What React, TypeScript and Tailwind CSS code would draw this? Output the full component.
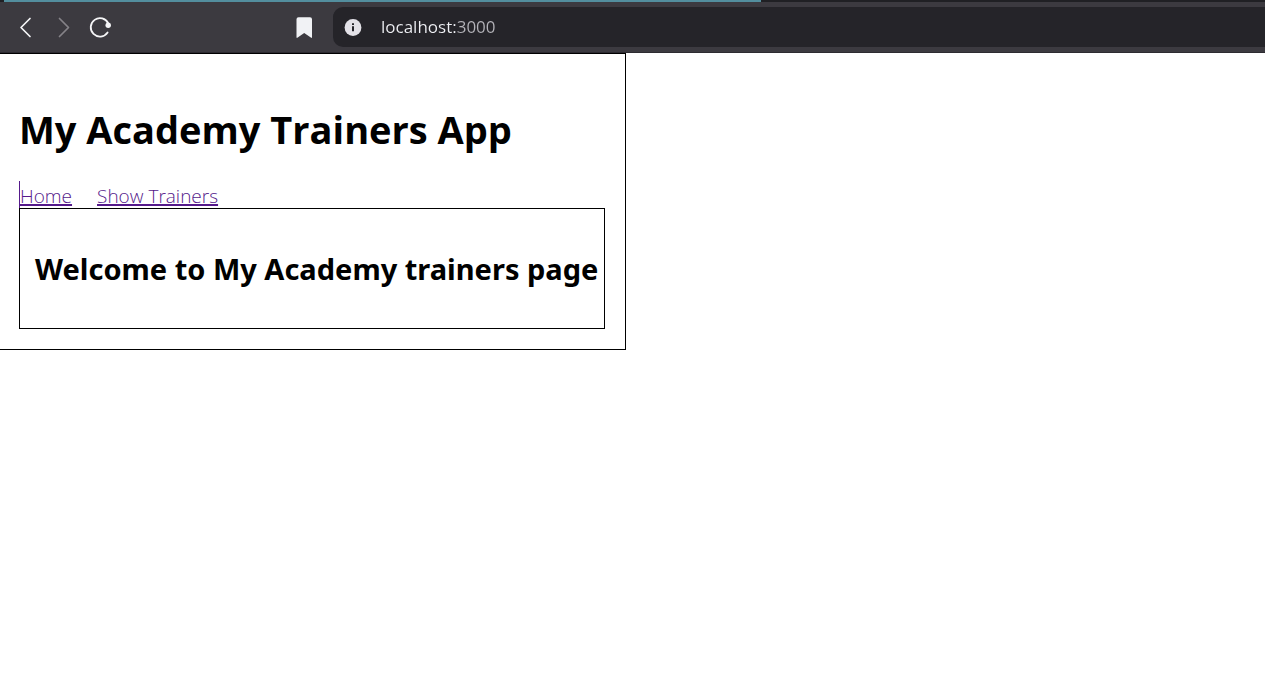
function BrowserBar() {
  return (
    <header className="border-b border-[#2d2b31] bg-[#3c3a40]">
      <div className="flex h-[2px] bg-[#202024] pl-[4px]">
        <div className="w-3/5 bg-[#538e9e]" />
      </div>
      <div className="flex items-center py-[5px]">
        <button type="button" aria-label="Back" className="ml-[14px] flex size-6 items-center justify-center">
          <svg width="24" height="24" viewBox="0 0 24 24" fill="none" stroke="#f5f5f7" strokeWidth="1.7" strokeLinecap="round" strokeLinejoin="round">
            <path d="M16 3.5 7 12.5l9 9" />
          </svg>
        </button>
        <button type="button" aria-label="Forward" className="ml-[14px] flex size-6 items-center justify-center">
          <svg width="24" height="24" viewBox="0 0 24 24" fill="none" stroke="#858388" strokeWidth="1.7" strokeLinecap="round" strokeLinejoin="round">
            <path d="m7.500 3.500 9 9-9 9" />
          </svg>
        </button>
        <button type="button" aria-label="Reload" className="ml-[12px] flex size-6 items-center justify-center">
          <svg width="24" height="24" viewBox="0 0 24 24" fill="none">
            <path d="M20.300 8.500A9.200 9.200 0 1 0 19.600 17.500" stroke="#f5f5f7" strokeWidth="1.800" strokeLinecap="round" />
            <circle cx="20.200" cy="10.200" r="2.700" fill="#f5f5f7" />
          </svg>
        </button>
        <button type="button" aria-label="Bookmarks" className="ml-[180px] flex size-6 items-center justify-center">
          <svg width="24" height="24" viewBox="0 0 24 24" fill="#f1f2f5">
            <path d="M4.500 4.200a2 2 0 0 1 2-2h11.500a2 2 0 0 1 2 2v17.800q0 1.400-1.200.6l-6.600-4.500-6.500 4.500q-1.200.8-1.200-.6z" />
          </svg>
        </button>
        <div className="ml-[17px] flex h-10 flex-1 items-center rounded-l-[10px] bg-[#252429] pl-[11px]">
          <button type="button" aria-label="Site information">
            <svg width="18" height="18" viewBox="0 0 18 18">
              <circle cx="9" cy="9.500" r="8.400" fill="#e4e2e8" />
              <path d="M8 8.300h2v5H8zM8 5.300h2v1.700H8z" fill="#252429" />
            </svg>
          </button>
          <input
            type="text"
            aria-label="Address"
            defaultValue="localhost:3000"
            className="ml-[19px] min-w-0 flex-1 bg-[linear-gradient(90deg,#f0f1f5_75px,#b4b3b9_75px)] bg-clip-text pb-px text-[17px] leading-6 text-transparent caret-white outline-none"
          />
        </div>
      </div>
    </header>
  );
}

export default function App() {
  return (
    <div className="min-h-screen bg-white font-['Open_Sans','Noto_Sans',sans-serif] text-black">
      <BrowserBar />
      <main className="w-[626px] max-w-full border border-l-0 border-black pr-5 pb-5 pl-[19px]">
        <h1 className="pt-[48px] pb-[25px] text-[38px] leading-[54px] font-bold whitespace-nowrap">My Academy Trainers App</h1>
        <nav className="flex gap-[25px] border-l border-[#551a8b] pt-[3px] text-[19px] leading-[24px] font-light text-[#551a8b]">
          <a href="#home" className="underline decoration-2">Home</a>
          <a href="#trainers" className="underline decoration-2">Show Trainers</a>
        </nav>
        <section className="border border-black px-[15px] pt-[39px] pb-[39px]">
          <h2 className="font-['Noto_Sans',sans-serif] text-[29px] leading-[41px] font-bold whitespace-nowrap">Welcome to My Academy trainers page</h2>
        </section>
      </main>
    </div>
  );
}
